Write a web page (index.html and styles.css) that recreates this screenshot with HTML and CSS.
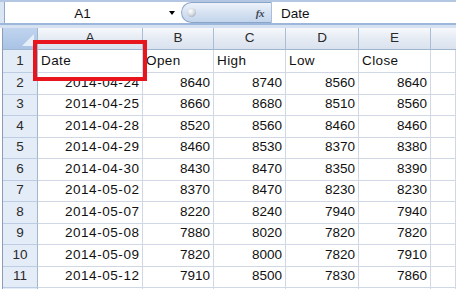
FILE: index.html
```html
<!DOCTYPE html>
<html>
<head>
<meta charset="utf-8">
<link rel="stylesheet" href="styles.css">
</head>
<body>
<div class="app">
  <div class="formula-bar">
    <div class="namebox">
      <span class="ref">A1</span>
      <span class="dd"></span>
    </div>
    <div class="pill">
      <span class="knob"></span>
      <span class="fx">fx</span>
    </div>
    <div class="formula">Date</div>
  </div>
  <div class="strip"></div>
  <div class="sheet">
    <div class="corner"></div>
    <div class="ch">A</div><div class="ch">B</div><div class="ch">C</div><div class="ch">D</div><div class="ch">E</div><div class="ch last"></div>

    <div class="rh">1</div><div class="c t">Date</div><div class="c t">Open</div><div class="c t">High</div><div class="c t">Low</div><div class="c t">Close</div><div class="c"></div>
    <div class="rh">2</div><div class="c n d">2014-04-24</div><div class="c n">8640</div><div class="c n">8740</div><div class="c n">8560</div><div class="c n">8640</div><div class="c"></div>
    <div class="rh">3</div><div class="c n d">2014-04-25</div><div class="c n">8660</div><div class="c n">8680</div><div class="c n">8510</div><div class="c n">8560</div><div class="c"></div>
    <div class="rh">4</div><div class="c n d">2014-04-28</div><div class="c n">8520</div><div class="c n">8560</div><div class="c n">8460</div><div class="c n">8460</div><div class="c"></div>
    <div class="rh">5</div><div class="c n d">2014-04-29</div><div class="c n">8460</div><div class="c n">8530</div><div class="c n">8370</div><div class="c n">8380</div><div class="c"></div>
    <div class="rh">6</div><div class="c n d">2014-04-30</div><div class="c n">8430</div><div class="c n">8470</div><div class="c n">8350</div><div class="c n">8390</div><div class="c"></div>
    <div class="rh">7</div><div class="c n d">2014-05-02</div><div class="c n">8370</div><div class="c n">8470</div><div class="c n">8230</div><div class="c n">8230</div><div class="c"></div>
    <div class="rh">8</div><div class="c n d">2014-05-07</div><div class="c n">8220</div><div class="c n">8240</div><div class="c n">7940</div><div class="c n">7940</div><div class="c"></div>
    <div class="rh">9</div><div class="c n d">2014-05-08</div><div class="c n">7880</div><div class="c n">8020</div><div class="c n">7820</div><div class="c n">7820</div><div class="c"></div>
    <div class="rh">10</div><div class="c n d">2014-05-09</div><div class="c n">7820</div><div class="c n">8000</div><div class="c n">7820</div><div class="c n">7910</div><div class="c"></div>
    <div class="rh">11</div><div class="c n d">2014-05-12</div><div class="c n">7910</div><div class="c n">8500</div><div class="c n">7830</div><div class="c n">7860</div><div class="c"></div>
    <div class="rh"></div><div class="c"></div><div class="c"></div><div class="c"></div><div class="c"></div><div class="c"></div><div class="c"></div>
  </div>
  <div class="highlight"></div>
</div>
</body>
</html>
```
FILE: styles.css
```css
html, body {
  margin: 0;
  padding: 0;
  background: #ffffff;
  overflow: hidden;
}
.app {
  position: relative;
  width: 456px;
  height: 289px;
  overflow: hidden;
  font-family: "Liberation Sans", Arial, sans-serif;
  font-size: 13.5px;
  color: #111;
}
.formula-bar {
  display: flex;
  height: 21px;
  border-top: 2px solid #b3c7e2;
  border-bottom: 2px solid #9db7da;
  padding-left: 4px;
  background-image: linear-gradient(to right, #dbe6f4 0, #dbe6f4 4px, #ffffff 4px);
}
.namebox {
  display: flex;
  align-items: center;
  width: 176px;
  border-left: 1px solid #8ea9cd;
  background: #ffffff;
}
.ref {
  width: 155px;
  text-align: center;
  line-height: 21px;
  padding-top: 1px;
}
.dd {
  margin-left: 9px;
  width: 0;
  height: 0;
  border-left: 3px solid transparent;
  border-right: 3px solid transparent;
  border-top: 4px solid #000;
  margin-top: 1px;
}
.pill {
  display: flex;
  align-items: center;
  justify-content: space-between;
  width: 91px;
  box-sizing: border-box;
  border: 1px solid #8aa5ca;
  border-right: 1px solid #a8bedc;
  border-radius: 11px 0 0 11px;
  background: linear-gradient(#eef3fa, #d6e2f2 50%, #c3d4eb);
  padding: 0 7px 0 5px;
}
.knob {
  width: 9px;
  height: 9px;
  border-radius: 50%;
  background: radial-gradient(circle at 40% 35%, #ffffff 0, #d8dde3 45%, #8e99a6 100%);
}
.fx {
  font-family: "Liberation Serif", "Times New Roman", serif;
  font-style: italic;
  font-weight: bold;
  font-size: 11px;
  color: #404a58;
  letter-spacing: -0.5px;
}
.formula {
  flex: 1;
  padding-left: 9px;
  line-height: 21px;
  padding-top: 1px;
}
.strip {
  height: 3px;
  background: #d6e2f1;
}
.sheet {
  display: grid;
  margin-left: 2px;
  border-left: 1px solid #8b9db5;
  grid-template-columns: 35px 105px 71px 72px 73px 72px 1fr;
  grid-template-rows: 22px 23px 22px 21px 22px 21px 22px 21px 22px 21px 22px 21px 22px;
}
.sheet > div {
  box-sizing: border-box;
  display: flex;
  align-items: flex-end;
  line-height: 16px;
  padding-bottom: 3px;
  white-space: nowrap;
  overflow: hidden;
}
.corner {
  position: relative;
  background: linear-gradient(#c0d4ee, #a9c3e6);
  border-right: 1px solid #9eb6ce;
  border-bottom: 1px solid #9eb6ce;
}
.corner::after {
  content: "";
  position: absolute;
  right: 3px;
  bottom: 3px;
  width: 0;
  height: 0;
  border-left: 12px solid transparent;
  border-bottom: 12px solid #e6eef8;
}
.ch {
  justify-content: center;
  background: linear-gradient(#f6f8fb, #e4eaf3 55%, #d9e2ee);
  border-right: 1px solid #a9bdd7;
  border-bottom: 1px solid #9eb6ce;
  color: #2a2a2a;
}
.ch.last {
  border-right: none;
}
.rh {
  justify-content: center;
  background: #e4ecf7;
  border-right: 1px solid #9eb6ce;
  border-bottom: 1px solid #bccce3;
  color: #2a2a2a;
}
.c {
  border-right: 1px solid #d0d7e5;
  border-bottom: 1px solid #d0d7e5;
}
.c.t {
  justify-content: flex-start;
  padding-left: 3px;
  letter-spacing: 0.4px;
}
.c.n {
  justify-content: flex-end;
  padding-right: 3px;
}
.c.d {
  letter-spacing: 0.55px;
  padding-right: 2.5px;
}
.highlight {
  position: absolute;
  left: 33px;
  top: 40px;
  width: 114px;
  height: 41px;
  box-sizing: border-box;
  border: 4px solid #e8151d;
}
```
